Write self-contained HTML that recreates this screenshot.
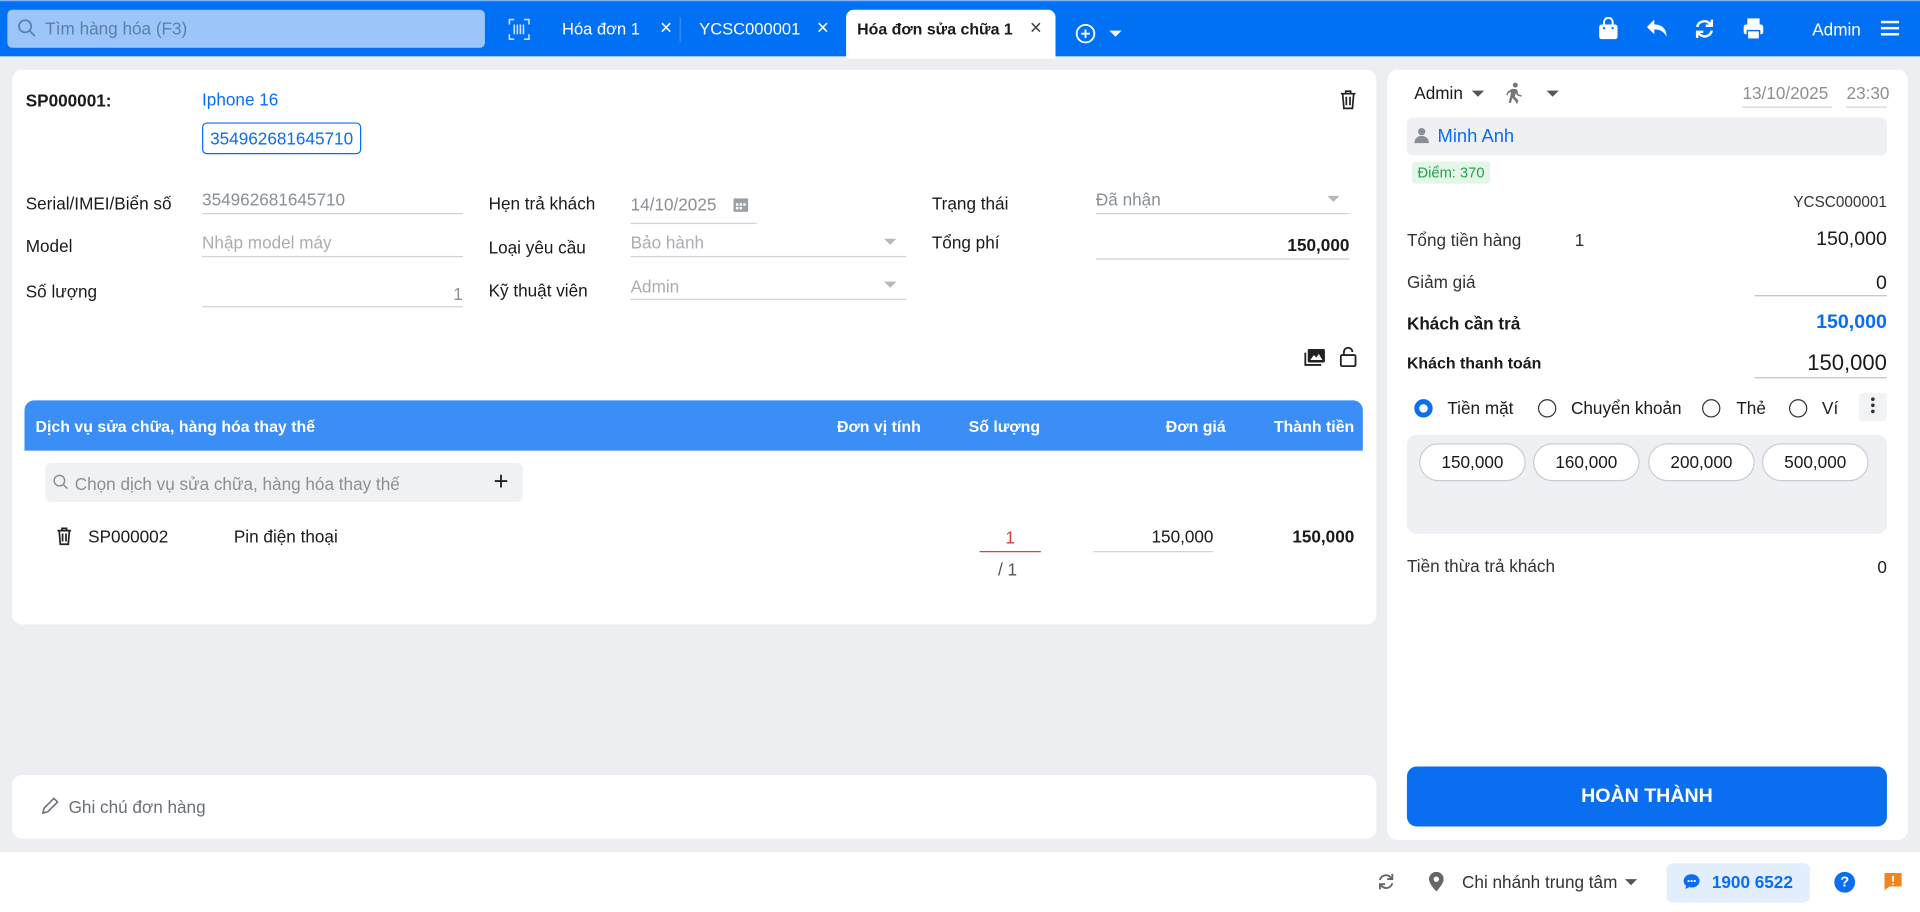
<!DOCTYPE html>
<html><head><meta charset="utf-8"><style>
*{box-sizing:border-box;margin:0;padding:0}
html,body{width:1920px;height:912px;overflow:hidden;background:#eceef1;font-family:"Liberation Sans","Noto Sans CJK SC",sans-serif;color:#1a1a1a}
#w{position:absolute;left:0;top:0;width:1568px;height:745px;transform:scale(1.22449);transform-origin:0 0;background:#eceef1;font-size:14px}
.a{position:absolute;white-space:nowrap}
.top{position:absolute;left:0;top:0;width:1568px;height:46px;background:#0070f4;border-top:1px solid #7fb2f5}
.card{position:absolute;background:#fff;border-radius:8px}
.ul{position:absolute;height:1px;background:#cfd3d8}
.g{color:#8a8f96}
.b{font-weight:bold}
.blue{color:#0a6ef0}
.caret{position:absolute;width:0;height:0;border-left:5px solid transparent;border-right:5px solid transparent;border-top:5px solid #8a8f96}
.pill{position:absolute;top:362px;height:31px;width:87px;border:1px solid #c9cdd2;border-radius:16px;background:#fff;text-align:center;line-height:29px;font-size:14px}
.rad{position:absolute;width:15px;height:15px;border:1.5px solid #333;border-radius:50%;top:326px}
.th{position:absolute;top:341px;color:#fff;font-weight:bold;font-size:13px}
</style></head><body><div id="w">
<div class="top">
 <div class="a" style="left:6px;top:7px;width:390px;height:31px;background:#9cc5f9;border-radius:4px"></div>
 <svg class="a" style="left:14px;top:14px" width="16" height="16" viewBox="0 0 16 16"><circle cx="6.5" cy="6.5" r="5" fill="none" stroke="#5b7fae" stroke-width="1.4"/><path d="M10 10l4.5 4.5" stroke="#5b7fae" stroke-width="1.4"/></svg>
 <div class="a" style="left:37px;top:14px;color:#5d7ea8;font-size:14px">Tìm hàng hóa (F3)</div>
 <svg class="a" style="left:414px;top:13px" width="20" height="20" viewBox="0 0 20 20" fill="none" stroke="#cfe0fb" stroke-width="1.3"><path d="M2 6V2h4M14 2h4v4M18 14v4h-4M6 18H2v-4"/><path d="M6 6v8M8.5 6v8M11 6v8M13.5 6v8"/></svg>
 <div class="a" style="left:459px;top:15px;color:#fff;font-size:13.5px">Hóa đơn 1</div>
 <div class="a" style="left:539px;top:12px;color:#fff;font-size:17px">×</div>
 <div class="a" style="left:555px;top:13px;width:1px;height:20px;background:#3d8ef5"></div>
 <div class="a" style="left:571px;top:15px;color:#fff;font-size:13.5px">YCSC000001</div>
 <div class="a" style="left:667px;top:12px;color:#fff;font-size:17px">×</div>
 <div class="a" style="left:691px;top:7px;width:171px;height:40px;background:#fff;border-radius:6px 6px 0 0"></div>
 <div class="a b" style="left:700px;top:15px;color:#1a1a1a;font-size:13px">Hóa đơn sửa chữa 1</div>
 <div class="a" style="left:841px;top:12px;color:#444;font-size:17px">×</div>
 <svg class="a" style="left:878px;top:18px" width="17" height="17" viewBox="0 0 17 17" fill="none" stroke="#fff" stroke-width="1.5"><circle cx="8.5" cy="8.5" r="7.2"/><path d="M8.5 5v7M5 8.5h7"/></svg>
 <div class="caret" style="left:906px;top:24px;border-top-color:#fff"></div>
 <svg class="a" style="left:1305px;top:13px" width="17" height="19" viewBox="0 0 17 19"><rect x="1" y="6" width="15" height="12" rx="2" fill="#fff"/><path d="M5 8V4a3.5 3.5 0 0 1 7 0v4" stroke="#fff" stroke-width="1.6" fill="none"/><circle cx="5" cy="9" r="1" fill="#0070f4"/><circle cx="12" cy="9" r="1" fill="#0070f4"/></svg>
 <svg class="a" style="left:1344px;top:14px" width="18" height="17" viewBox="0 0 18 17"><path d="M7 1L1 7l6 6V9c5 0 8 2 10 6 0-6-3-10-10-10z" fill="#fff"/></svg>
 <svg class="a" style="left:1383px;top:13px" width="18" height="19" viewBox="0 0 18 19" fill="none" stroke="#fff" stroke-width="2"><path d="M3 8a6 6 0 0 1 10-3l2 2M15 2v5h-5M15 11a6 6 0 0 1-10 3l-2-2M3 17v-5h5"/></svg>
 <svg class="a" style="left:1423px;top:13px" width="18" height="19" viewBox="0 0 18 19"><rect x="4" y="1" width="10" height="5" fill="#fff"/><rect x="1" y="6" width="16" height="8" rx="2" fill="#fff"/><rect x="4" y="11" width="10" height="7" fill="#fff" stroke="#0070f4" stroke-width="1.2"/></svg>
 <div class="a" style="left:1480px;top:15px;color:#fff">Admin</div>
 <svg class="a" style="left:1536px;top:15px" width="15" height="14" viewBox="0 0 15 14" fill="#fff"><rect y="1" width="15" height="2"/><rect y="6" width="15" height="2"/><rect y="11" width="15" height="2"/></svg>
</div>

<div class="card" style="left:10px;top:57px;width:1114px;height:453px"></div>
<div class="a b" style="left:21px;top:74px">SP000001:</div>
<div class="a blue" style="left:165px;top:73px;font-weight:500">Iphone 16</div>
<div class="a blue" style="left:165px;top:100px;width:130px;height:26px;border:1px solid #0a6ef0;border-radius:4px;text-align:center;line-height:24px">354962681645710</div>
<svg class="a" style="left:1094px;top:73px" width="14" height="17" viewBox="0 0 14 17" fill="none" stroke="#222" stroke-width="1.4"><path d="M1 3.5h12M5 3V1.5h4V3M2.5 3.5l1 12h7l1-12M5.5 6v7M8.5 6v7"/></svg>

<div class="a" style="left:21px;top:158px;font-weight:500">Serial/IMEI/Biển số</div>
<div class="a g" style="left:165px;top:155px">354962681645710</div>
<div class="ul" style="left:165px;top:174px;width:213px"></div>
<div class="a" style="left:399px;top:158px;font-weight:500">Hẹn trả khách</div>
<div class="a g" style="left:515px;top:159px">14/10/2025</div>
<svg class="a" style="left:598px;top:160px" width="14" height="14" viewBox="0 0 14 14" fill="#9aa0a6"><rect x="1" y="2" width="12" height="11" rx="1"/><rect x="3" y="6" width="2" height="2" fill="#fff"/><rect x="6" y="6" width="2" height="2" fill="#fff"/><rect x="9" y="6" width="2" height="2" fill="#fff"/><rect x="3" y="9" width="2" height="2" fill="#fff"/><rect x="6" y="9" width="2" height="2" fill="#fff"/></svg>
<div class="ul" style="left:515px;top:182px;width:103px"></div>
<div class="a" style="left:761px;top:158px;font-weight:500">Trạng thái</div>
<div class="a g" style="left:895px;top:155px">Đã nhận</div>
<div class="caret" style="left:1084px;top:160px;border-top-color:#b5b9be"></div>
<div class="ul" style="left:895px;top:174px;width:207px"></div>

<div class="a" style="left:21px;top:193px;font-weight:500">Model</div>
<div class="a" style="left:165px;top:190px;color:#a9adb2">Nhập model máy</div>
<div class="ul" style="left:165px;top:209px;width:213px"></div>
<div class="a" style="left:399px;top:194px;font-weight:500">Loại yêu cầu</div>
<div class="a" style="left:515px;top:190px;color:#a9adb2">Bảo hành</div>
<div class="caret" style="left:722px;top:195px;border-top-color:#b5b9be"></div>
<div class="ul" style="left:515px;top:209px;width:225px"></div>
<div class="a" style="left:761px;top:190px;font-weight:500">Tổng phí</div>
<div class="a b" style="left:1002px;top:192px;width:100px;text-align:right">150,000</div>
<div class="ul" style="left:895px;top:211px;width:207px"></div>

<div class="a" style="left:21px;top:230px;font-weight:500">Số lượng</div>
<div class="a g" style="left:300px;top:232px;width:78px;text-align:right">1</div>
<div class="ul" style="left:165px;top:250px;width:213px"></div>
<div class="a" style="left:399px;top:229px;font-weight:500">Kỹ thuật viên</div>
<div class="a" style="left:515px;top:226px;color:#a9adb2">Admin</div>
<div class="caret" style="left:722px;top:230px;border-top-color:#b5b9be"></div>
<div class="ul" style="left:515px;top:244px;width:225px"></div>

<svg class="a" style="left:1065px;top:284px" width="18" height="16" viewBox="0 0 18 16"><rect x="3" y="1" width="14" height="11" rx="1" fill="#222"/><path d="M5 10l3-4 2 2 2-3 3 5z" fill="#fff"/><path d="M1 4v10h13" stroke="#222" stroke-width="1.5" fill="none"/></svg>
<svg class="a" style="left:1094px;top:283px" width="14" height="17" viewBox="0 0 14 17" fill="none" stroke="#222" stroke-width="1.5"><rect x="1" y="7" width="12" height="9" rx="1"/><path d="M3.5 7V4.5a3.5 3.5 0 0 1 7 0"/></svg>

<div class="a" style="left:20px;top:327px;width:1093px;height:41px;background:#3a8ef6;border-radius:8px 8px 0 0"></div>
<div class="th" style="left:29px">Dịch vụ sửa chữa, hàng hóa thay thế</div>
<div class="th" style="left:660px;width:92px;text-align:right">Đơn vị tính</div>
<div class="th" style="left:791px">Số lượng</div>
<div class="th" style="left:900px;width:101px;text-align:right">Đơn giá</div>
<div class="th" style="left:1000px;width:106px;text-align:right">Thành tiền</div>

<div class="a" style="left:37px;top:378px;width:390px;height:32px;background:#f0f1f3;border-radius:5px"></div>
<svg class="a" style="left:43px;top:387px" width="13" height="13" viewBox="0 0 13 13" fill="none" stroke="#8a8f96" stroke-width="1.2"><circle cx="5.5" cy="5.5" r="4.3"/><path d="M8.5 8.5l3.5 3.5"/></svg>
<div class="a" style="left:61px;top:387px;color:#8a8f96">Chọn dịch vụ sửa chữa, hàng hóa thay thế</div>
<div class="a" style="left:403px;top:382px;font-size:21px;color:#222">+</div>

<svg class="a" style="left:46px;top:430px" width="13" height="16" viewBox="0 0 14 17" fill="none" stroke="#222" stroke-width="1.5"><path d="M1 3.5h12M5 3V1.5h4V3M2.5 3.5l1 12h7l1-12M5.5 6v7M8.5 6v7"/></svg>
<div class="a" style="left:72px;top:430px">SP000002</div>
<div class="a" style="left:191px;top:430px">Pin điện thoại</div>
<div class="a" style="left:800px;top:431px;width:50px;text-align:center;color:#e53935">1</div>
<div class="a" style="left:800px;top:450px;width:50px;height:1px;background:#e53935"></div>
<div class="a" style="left:815px;top:457px;color:#555">/ 1</div>
<div class="a" style="left:893px;top:430px;width:98px;text-align:right">150,000</div>
<div class="ul" style="left:893px;top:450px;width:98px"></div>
<div class="a b" style="left:1006px;top:430px;width:100px;text-align:right">150,000</div>

<div class="card" style="left:10px;top:633px;width:1114px;height:52px"></div>
<svg class="a" style="left:34px;top:651px" width="14" height="14" viewBox="0 0 14 14"><path d="M1 13l1-4 8-8 3 3-8 8z" fill="none" stroke="#6b7077" stroke-width="1.3"/></svg>
<div class="a" style="left:56px;top:651px;color:#6b7077">Ghi chú đơn hàng</div>

<div class="card" style="left:1133px;top:57px;width:425px;height:629px"></div>
<div class="a" style="left:1155px;top:68px">Admin</div>
<div class="caret" style="left:1202px;top:74px;border-top-color:#555"></div>
<svg class="a" style="left:1230px;top:67px" width="14" height="18" viewBox="0 0 14 18" fill="#777"><circle cx="7.5" cy="2.5" r="2"/><path d="M5 5.5l4 .5 1 4 3 1-.5 1-3.5-1-1-2-1 3 3 3-1 3-2-3-2-2-1 4H2l1.5-6 .5-3-2 1-1 2-1-.5 1.5-3z"/></svg>
<div class="caret" style="left:1263px;top:74px;border-top-color:#555"></div>
<div class="a g" style="left:1423px;top:68px">13/10/2025</div>
<div class="ul" style="left:1423px;top:87px;width:73px"></div>
<div class="a g" style="left:1508px;top:68px">23:30</div>
<div class="ul" style="left:1508px;top:87px;width:33px"></div>

<div class="a" style="left:1149px;top:96px;width:392px;height:31px;background:#eef0f3;border-radius:5px"></div>
<svg class="a" style="left:1155px;top:104px" width="12" height="13" viewBox="0 0 12 13" fill="#8a8f96"><circle cx="6" cy="3.5" r="3"/><path d="M0 13c0-4 3-6 6-6s6 2 6 6z"/></svg>
<div class="a blue" style="left:1174px;top:103px;font-size:15px;font-weight:500">Minh Anh</div>
<div class="a" style="left:1153px;top:132px;width:64px;height:18px;background:#e3f6e8;border-radius:3px;color:#22a34a;font-size:12px;text-align:center;line-height:18px">Điểm: 370</div>
<div class="a" style="left:1441px;top:158px;width:100px;text-align:right;font-size:12.5px;color:#333">YCSC000001</div>

<div class="a" style="left:1149px;top:188px;color:#333">Tổng tiền hàng</div>
<div class="a" style="left:1286px;top:188px;color:#333">1</div>
<div class="a" style="left:1400px;top:187px;width:141px;text-align:right;font-size:16px">150,000</div>
<div class="a" style="left:1149px;top:222px;color:#333">Giảm giá</div>
<div class="a" style="left:1440px;top:223px;width:101px;text-align:right;font-size:16px">0</div>
<div class="ul" style="left:1433px;top:241px;width:108px;background:#bfc3c8"></div>
<div class="a b" style="left:1149px;top:256px">Khách cần trả</div>
<div class="a b blue" style="left:1400px;top:255px;width:141px;text-align:right;font-size:16px">150,000</div>
<div class="a b" style="left:1149px;top:289px;font-size:13px">Khách thanh toán</div>
<div class="a" style="left:1400px;top:286px;width:141px;text-align:right;font-size:18px">150,000</div>
<div class="ul" style="left:1433px;top:308px;width:108px;background:#bfc3c8"></div>

<div class="rad" style="left:1155px;border:4.5px solid #0a6ef0"></div>
<div class="a" style="left:1182px;top:325px">Tiền mặt</div>
<div class="rad" style="left:1256px"></div>
<div class="a" style="left:1283px;top:325px">Chuyển khoản</div>
<div class="rad" style="left:1390px"></div>
<div class="a" style="left:1418px;top:325px">Thẻ</div>
<div class="rad" style="left:1461px"></div>
<div class="a" style="left:1488px;top:325px">Ví</div>
<div class="a" style="left:1518px;top:321px;width:23px;height:23px;background:#f2f3f5;border-radius:3px"></div>
<svg class="a" style="left:1527px;top:323px" width="5" height="16" viewBox="0 0 5 16" fill="#333"><circle cx="2.5" cy="3" r="1.5"/><circle cx="2.5" cy="8" r="1.5"/><circle cx="2.5" cy="13" r="1.5"/></svg>

<div class="a" style="left:1149px;top:355px;width:392px;height:81px;background:#eef0f3;border-radius:8px"></div>
<div class="pill" style="left:1159px">150,000</div>
<div class="pill" style="left:1252px">160,000</div>
<div class="pill" style="left:1346px">200,000</div>
<div class="pill" style="left:1439px">500,000</div>

<div class="a" style="left:1149px;top:454px;color:#333">Tiền thừa trả khách</div>
<div class="a" style="left:1500px;top:455px;width:41px;text-align:right">0</div>

<div class="a b" style="left:1149px;top:626px;width:392px;height:49px;background:#0a6ef0;border-radius:8px;color:#fff;font-size:16px;text-align:center;line-height:49px">HOÀN THÀNH</div>

<div class="a" style="left:0;top:696px;width:1568px;height:49px;background:#fff"></div>
<svg class="a" style="left:1124px;top:712px" width="16" height="16" viewBox="0 0 18 19" fill="none" stroke="#666" stroke-width="1.8"><path d="M3 8a6 6 0 0 1 10-3l2 2M15 2v5h-5M15 11a6 6 0 0 1-10 3l-2-2M3 17v-5h5"/></svg>
<svg class="a" style="left:1167px;top:712px" width="12" height="16" viewBox="0 0 12 16" fill="#666"><path d="M6 0a6 6 0 0 1 6 6c0 4-6 10-6 10S0 10 0 6a6 6 0 0 1 6-6z"/><circle cx="6" cy="6" r="2.2" fill="#fff"/></svg>
<div class="a" style="left:1194px;top:712px;color:#333">Chi nhánh trung tâm</div>
<div class="caret" style="left:1327px;top:718px;border-top-color:#555"></div>
<div class="a" style="left:1361px;top:705px;width:117px;height:32px;background:#e3eefc;border-radius:5px"></div>
<svg class="a" style="left:1374px;top:713px" width="15" height="14" viewBox="0 0 15 14"><path d="M7.5 1C3.5 1 1 3.5 1 6.5c0 1.6.7 3 2 4L2.5 13l3-1.5c.6.2 1.3.3 2 .3 4 0 6.5-2.5 6.5-5.3S11.5 1 7.5 1z" fill="#0a6ef0"/><circle cx="5" cy="6.5" r=".9" fill="#fff"/><circle cx="7.5" cy="6.5" r=".9" fill="#fff"/><circle cx="10" cy="6.5" r=".9" fill="#fff"/></svg>
<div class="a b blue" style="left:1398px;top:712px">1900 6522</div>
<div class="a b" style="left:1498px;top:712px;width:17px;height:17px;border-radius:50%;background:#0a6ef0;color:#fff;font-size:12px;text-align:center;line-height:17px">?</div>
<svg class="a" style="left:1538px;top:712px" width="16" height="16" viewBox="0 0 16 16"><path d="M1 1h14v11H5l-4 3z" fill="#f5841f"/><path d="M8 3.5v4.5M8 9.5v1" stroke="#fff" stroke-width="1.6"/></svg>
</div></body></html>
